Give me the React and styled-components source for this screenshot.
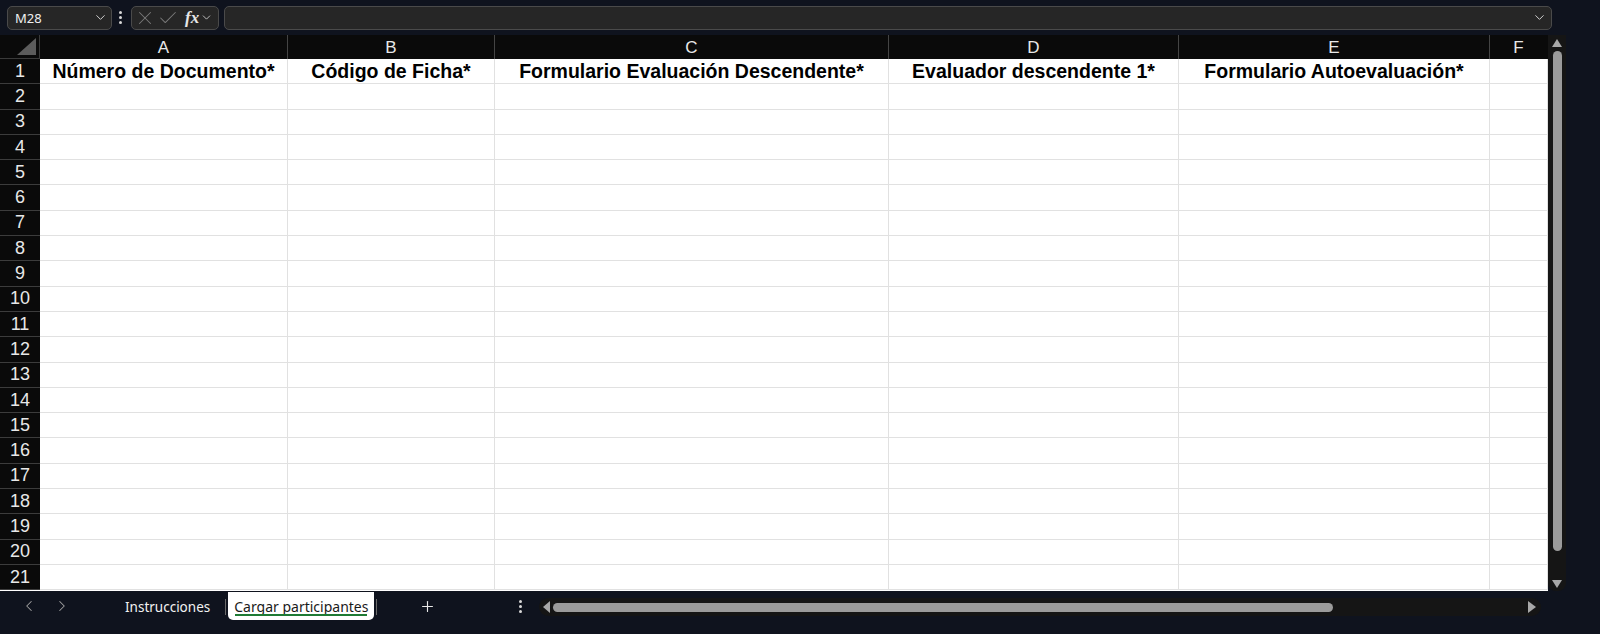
import React from 'react'
import styled, { createGlobalStyle } from 'styled-components'
import { ChevronDown, ChevronLeft, ChevronRight, X, Check, Plus } from 'lucide-react'

const NAVY = '#0f131e'
const UI_FONT = '"Noto Sans", "Open Sans", sans-serif'
const CELL_FONT = '"Liberation Sans", Arial, sans-serif'

const Global = createGlobalStyle`
  html, body { margin: 0; padding: 0; background: ${NAVY}; }
  body { font-family: ${UI_FONT}; overflow: hidden; }
`

const columns = [
  { key: 'A', width: 248, title: 'Número de Documento*' },
  { key: 'B', width: 207, title: 'Código de Ficha*' },
  { key: 'C', width: 394, title: 'Formulario Evaluación Descendente*' },
  { key: 'D', width: 290, title: 'Evaluador descendente 1*' },
  { key: 'E', width: 311, title: 'Formulario Autoevaluación*' },
  { key: 'F', width: 58, title: '' },
]
const rows = Array.from({ length: 21 }, (_, i) => i + 1)

const Frame = styled.div`
  width: 1600px;
  height: 634px;
  background: ${NAVY};
  display: flex;
  flex-direction: column;
  overflow: hidden;
`

const TopBar = styled.div`
  height: 35px;
  display: flex;
  align-items: center;
  padding: 0 48px 0 7px;
  gap: 4px;
  box-sizing: border-box;
`

const Box = styled.div`
  height: 24px;
  box-sizing: border-box;
  border: 1px solid #4a4a4a;
  border-radius: 5px;
  background: ${p => p.$bg || '#262626'};
  display: flex;
  align-items: center;
  color: #f0f0f0;
  font-size: 13px;
`

const NameBox = styled(Box)`
  width: 105px;
  padding: 0 3px 0 7px;
  justify-content: space-between;
`

const FxBox = styled(Box)`
  width: 88px;
  padding: 0 3px 0 2px;
  gap: 1px;
  color: #7a7a7a;
  margin-left: 2px;
`

const FxText = styled.span`
  font-family: "Liberation Serif", "DejaVu Serif", serif;
  font-style: italic;
  font-weight: bold;
  font-size: 17px;
  color: #e6e6e6;
  margin-left: 5px;
  line-height: 1;
`

const FormulaBox = styled(Box)`
  flex: 1;
  justify-content: flex-end;
  padding-right: 4px;
  margin-left: 1px;
`

const Dots = styled.div`
  display: flex;
  flex-direction: column;
  gap: 2px;
  padding: 0 3px;
  span {
    width: 3px;
    height: 3px;
    border-radius: 50%;
    background: #d8d8d8;
  }
`

const SheetArea = styled.div`
  display: flex;
  height: 556px;
`

const Grid = styled.div`
  width: 1548px;
  overflow: hidden;
  display: grid;
  grid-template-columns: 40px ${columns.map(c => c.width + 'px').join(' ')};
  grid-template-rows: 24px repeat(21, 25.3px);
  background: #fff;
  font-family: ${CELL_FONT};
`

const Corner = styled.div`
  background: #0a0a0a;
  position: relative;
  border-right: 1px solid #3a3a3a;
  border-bottom: 1px solid #3a3a3a;
  &::after {
    content: '';
    position: absolute;
    right: 3px;
    bottom: 3px;
    width: 0;
    height: 0;
    border-left: 19px solid transparent;
    border-bottom: 17px solid #5c5c5c;
  }
`

const ColHead = styled.div`
  background: #0a0a0a;
  color: #e8e8e8;
  font-size: 17px;
  display: flex;
  align-items: center;
  justify-content: center;
  border-right: 1px solid ${p => (p.$last ? 'transparent' : '#444')};
  padding-top: 1px;
  box-sizing: border-box;
`

const RowHead = styled.div`
  background: #0a0a0a;
  color: #e8e8e8;
  font-size: 18px;
  display: flex;
  align-items: center;
  justify-content: center;
  border-bottom: 1px solid #3c3c3c;
  box-sizing: border-box;
`

const Cell = styled.div`
  border-right: 1px solid #e1e1e1;
  border-bottom: 1px solid #e1e1e1;
  box-sizing: border-box;
  display: flex;
  align-items: center;
  justify-content: center;
  font-weight: ${p => (p.$bold ? 'bold' : 'normal')};
  font-size: 19.5px;
  color: #000;
  white-space: nowrap;
  overflow: hidden;
`

const VScroll = styled.div`
  width: 18px;
  background: #151515;
  border-radius: 0 0 8px 8px;
  display: flex;
  flex-direction: column;
  align-items: center;
  padding: 4px 0 3px;
  box-sizing: border-box;
  gap: 4px;
`

const Arrow = styled.div`
  width: 0;
  height: 0;
  border-left: ${p => (p.$dir === 'up' || p.$dir === 'down' ? '5px solid transparent' : p.$dir === 'right' ? '8px solid #a8a8a8' : 'none')};
  border-right: ${p => (p.$dir === 'up' || p.$dir === 'down' ? '5px solid transparent' : p.$dir === 'left' ? '7px solid #a8a8a8' : 'none')};
  border-top: ${p => (p.$dir === 'left' || p.$dir === 'right' ? '6px solid transparent' : p.$dir === 'down' ? '8px solid #a8a8a8' : 'none')};
  border-bottom: ${p => (p.$dir === 'left' || p.$dir === 'right' ? '6px solid transparent' : p.$dir === 'up' ? '8px solid #a8a8a8' : 'none')};
  flex: none;
`

const VThumb = styled.div`
  width: 9px;
  height: 500px;
  background: #9b9b9b;
  border-radius: 5px;
  flex: none;
`

const BottomBar = styled.div`
  height: 30px;
  display: flex;
  align-items: stretch;
  font-family: ${UI_FONT};
  font-size: 14px;
`

const NavButtons = styled.div`
  width: 112px;
  display: flex;
  align-items: center;
  padding-left: 20px;
  gap: 15px;
  color: #a0a0a0;
  box-sizing: border-box;
`

const Tab = styled.div`
  display: flex;
  align-items: center;
  padding: 0 ${p => (p.$active ? '6px' : '13px')};
  font-size: ${p => (p.$active ? '14px' : '13.5px')};
  color: ${p => (p.$active ? '#1a1a1a' : '#f2f2f2')};
  background: ${p => (p.$active ? '#fff' : 'transparent')};
  border-radius: 0 0 5px 5px;
  position: relative;
  margin-top: ${p => (p.$active ? '1px' : '2px')};
  margin-bottom: 1px;
  ${p =>
    p.$active &&
    `&::after {
      content: '';
      position: absolute;
      left: 7px;
      right: 7px;
      bottom: 4px;
      height: 2px;
      background: #1e7a34;
    }`}
`

const Sep = styled.div`
  width: 1px;
  background: #6a6a6a;
  margin: 8px 2px 6px;
`

const AddTab = styled.div`
  width: 96px;
  display: flex;
  align-items: center;
  justify-content: center;
  color: #e8e8e8;
`

const MoreArea = styled.div`
  width: 64px;
  display: flex;
  align-items: center;
  justify-content: center;
  padding-left: 26px;
  box-sizing: border-box;
`

const HScroll = styled.div`
  width: 1002px;
  height: 18px;
  margin-top: 7px;
  background: #151515;
  border-radius: 9px;
  display: flex;
  align-items: center;
  padding: 0 5px 0 4px;
  gap: 3px;
  box-sizing: border-box;
`

const HThumb = styled.div`
  width: 780px;
  height: 9px;
  background: #9b9b9b;
  border-radius: 5px;
`

const Spacer = styled.div`
  flex: 1;
`

export default function App() {
  return (
    <Frame>
      <Global />
      <TopBar>
        <NameBox>
          <span>M28</span>
          <ChevronDown size={15} strokeWidth={1.6} color="#d0d0d0" />
        </NameBox>
        <Dots><span /><span /><span /></Dots>
        <FxBox>
          <X size={22} strokeWidth={1.1} />
          <Check size={22} strokeWidth={1.1} />
          <FxText>fx</FxText>
          <ChevronDown size={13} strokeWidth={1.6} color="#d0d0d0" />
        </FxBox>
        <FormulaBox>
          <ChevronDown size={15} strokeWidth={1.6} color="#d0d0d0" />
        </FormulaBox>
      </TopBar>

      <SheetArea>
        <Grid>
          <Corner />
          {columns.map((c, i) => (
            <ColHead key={c.key} $last={i === columns.length - 1}>{c.key}</ColHead>
          ))}
          {rows.map(r => (
            <React.Fragment key={r}>
              <RowHead>{r}</RowHead>
              {columns.map(c => (
                <Cell key={c.key} $bold={r === 1}>{r === 1 ? c.title : ''}</Cell>
              ))}
            </React.Fragment>
          ))}
        </Grid>
        <VScroll>
          <Arrow $dir="up" />
          <VThumb />
          <Spacer />
          <Arrow $dir="down" />
        </VScroll>
      </SheetArea>

      <BottomBar>
        <NavButtons>
          <ChevronLeft size={18} strokeWidth={1.4} />
          <ChevronRight size={18} strokeWidth={1.4} />
        </NavButtons>
        <Tab>Instrucciones</Tab>
        <Sep />
        <Tab $active>Cargar participantes</Tab>
        <Sep />
        <AddTab>
          <Plus size={17} strokeWidth={1.6} />
        </AddTab>
        <MoreArea>
          <Dots><span /><span /><span /></Dots>
        </MoreArea>
        <HScroll>
          <Arrow $dir="left" />
          <HThumb />
          <Spacer />
          <Arrow $dir="right" />
        </HScroll>
      </BottomBar>
    </Frame>
  )
}
